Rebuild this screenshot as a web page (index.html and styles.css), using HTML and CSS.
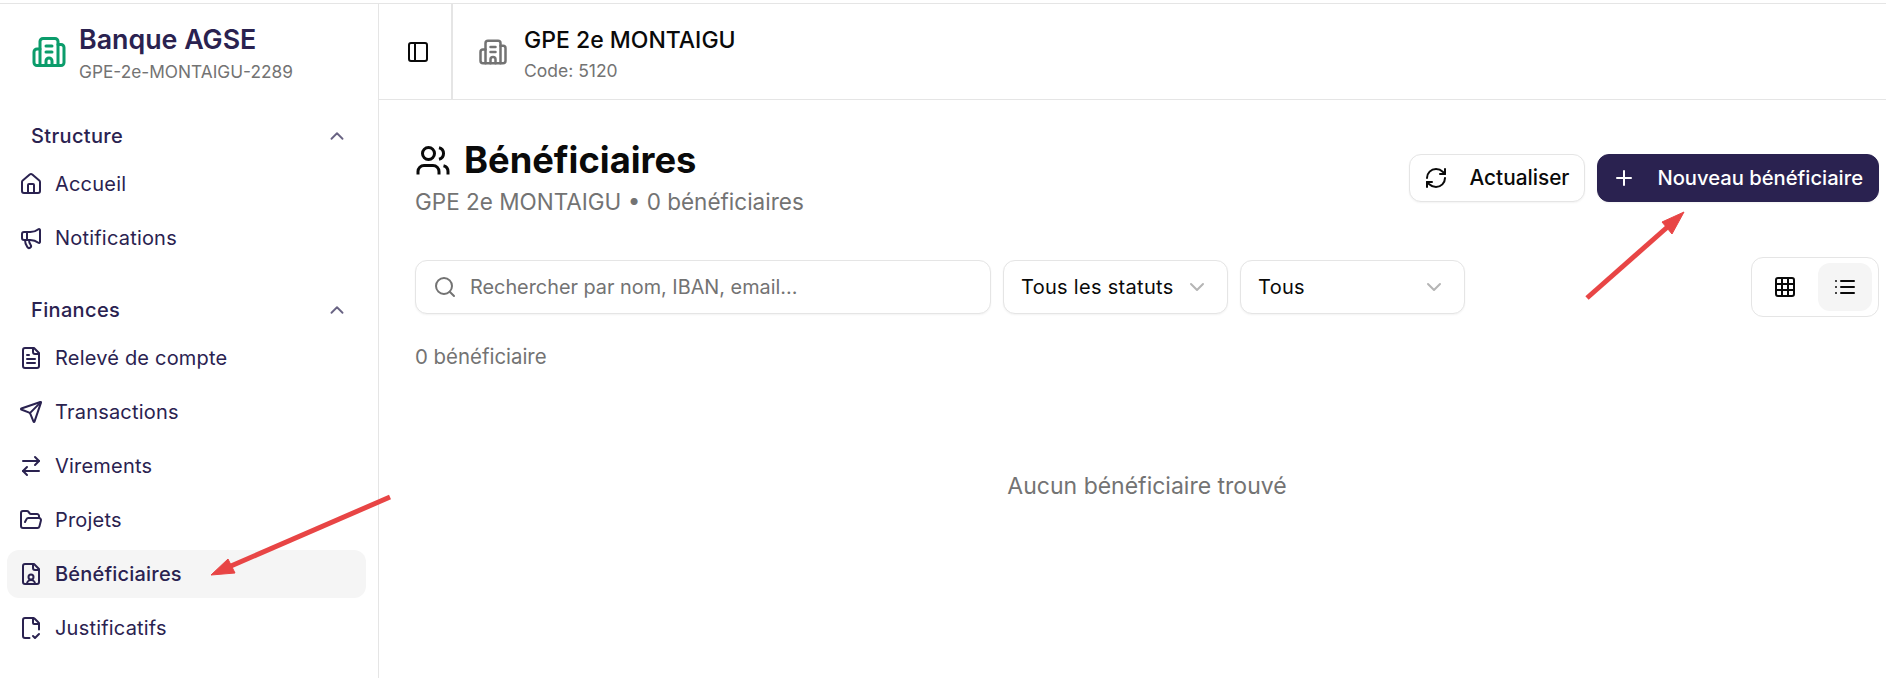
FILE: index.html
```html
<!DOCTYPE html>
<html lang="fr">
<head>
    <meta charset="UTF-8">
    <title>Bénéficiaires - Banque AGSE</title>
    <link rel="stylesheet" href="styles.css">
</head>
<body>
    <svg class="sprite" width="0" height="0">
        <symbol id="i-building" viewBox="0 0 24 24"><path d="M10 12h4"/><path d="M10 8h4"/><path d="M14 21v-3a2 2 0 0 0-4 0v3"/><path d="M6 10H4a2 2 0 0 0-2 2v7a2 2 0 0 0 2 2h16a2 2 0 0 0 2-2V9a2 2 0 0 0-2-2h-2"/><path d="M6 21V5a2 2 0 0 1 2-2h8a2 2 0 0 1 2 2v16"/></symbol>
        <symbol id="i-up" viewBox="0 0 24 24"><path d="m18 15-6-6-6 6"/></symbol>
        <symbol id="i-down" viewBox="0 0 24 24"><path d="m6 9 6 6 6-6"/></symbol>
        <symbol id="i-home" viewBox="0 0 24 24"><path d="M15 21v-8a1 1 0 0 0-1-1h-4a1 1 0 0 0-1 1v8"/><path d="M3 10a2 2 0 0 1 .709-1.528l7-6a2 2 0 0 1 2.582 0l7 6A2 2 0 0 1 21 10v9a2 2 0 0 1-2 2H5a2 2 0 0 1-2-2z"/></symbol>
        <symbol id="i-megaphone" viewBox="0 0 24 24"><path d="M11 6a13 13 0 0 0 8.4-2.8A1 1 0 0 1 21 4v12a1 1 0 0 1-1.6.8A13 13 0 0 0 11 14H5a2 2 0 0 1-2-2V8a2 2 0 0 1 2-2z"/><path d="M6 14a12 12 0 0 0 2.4 7.2 2 2 0 0 0 3.2-2.4A8 8 0 0 1 10 14"/><path d="M8 6v8"/></symbol>
        <symbol id="i-file" viewBox="0 0 24 24"><path d="M15 2H6a2 2 0 0 0-2 2v16a2 2 0 0 0 2 2h12a2 2 0 0 0 2-2V7Z"/><path d="M14 2v4a2 2 0 0 0 2 2h4"/><path d="M10 9H8"/><path d="M16 13H8"/><path d="M16 17H8"/></symbol>
        <symbol id="i-send" viewBox="0 0 24 24"><path d="M14.536 21.686a.5.5 0 0 0 .937-.024l6.5-19a.496.496 0 0 0-.635-.635l-19 6.5a.5.5 0 0 0-.024.937l7.93 3.18a2 2 0 0 1 1.112 1.11z"/><path d="m21.854 2.147-10.94 10.939"/></symbol>
        <symbol id="i-swap" viewBox="0 0 24 24"><path d="m16 3 4 4-4 4"/><path d="M20 7H4"/><path d="m8 21-4-4 4-4"/><path d="M4 17h16"/></symbol>
        <symbol id="i-folder" viewBox="0 0 24 24"><path d="m6 14 1.5-2.9A2 2 0 0 1 9.24 10H20a2 2 0 0 1 1.94 2.5l-1.54 6a2 2 0 0 1-1.95 1.5H4a2 2 0 0 1-2-2V5a2 2 0 0 1 2-2h3.9a2 2 0 0 1 1.69.9l.81 1.2a2 2 0 0 0 1.67.9H18a2 2 0 0 1 2 2v2"/></symbol>
        <symbol id="i-file-user" viewBox="0 0 24 24"><path d="M14 2v4a2 2 0 0 0 2 2h4"/><path d="M16 22a4 4 0 0 0-8 0"/><path d="M15 2H6a2 2 0 0 0-2 2v16a2 2 0 0 0 2 2h12a2 2 0 0 0 2-2V7z"/><circle cx="12" cy="15" r="2.5"/></symbol>
        <symbol id="i-file-check" viewBox="0 0 24 24"><path d="M10.5 22H6a2 2 0 0 1-2-2V4a2 2 0 0 1 2-2h8a2.4 2.4 0 0 1 1.706.706l3.588 3.588A2.4 2.4 0 0 1 20 7v6.5"/><path d="M14 2v5a1 1 0 0 0 1 1h5"/><path d="m14 20 2 2 4-4"/></symbol>
        <symbol id="i-panel" viewBox="0 0 24 24"><rect width="18" height="18" x="3" y="3" rx="2"/><path d="M9 3v18"/></symbol>
        <symbol id="i-users" viewBox="0 0 24 24"><path d="M16 21v-2a4 4 0 0 0-4-4H6a4 4 0 0 0-4 4v2"/><circle cx="9" cy="7" r="4"/><path d="M22 21v-2a4 4 0 0 0-3-3.87"/><path d="M16 3.13a4 4 0 0 1 0 7.75"/></symbol>
        <symbol id="i-refresh" viewBox="0 0 24 24"><path d="M3 12a9 9 0 0 1 9-9 9.75 9.75 0 0 1 6.74 2.74L21 8"/><path d="M21 3v5h-5"/><path d="M21 12a9 9 0 0 1-9 9 9.75 9.75 0 0 1-6.74-2.74L3 16"/><path d="M8 16H3v5"/></symbol>
        <symbol id="i-plus" viewBox="0 0 24 24"><path d="M5 12h14"/><path d="M12 5v14"/></symbol>
        <symbol id="i-search" viewBox="0 0 24 24"><circle cx="11" cy="11" r="8"/><path d="m21 21-4.3-4.3"/></symbol>
        <symbol id="i-grid" viewBox="0 0 24 24"><rect width="18" height="18" x="3" y="3" rx="2"/><path d="M3 9h18"/><path d="M3 15h18"/><path d="M9 3v18"/><path d="M15 3v18"/></symbol>
        <symbol id="i-list" viewBox="0 0 24 24"><path d="M3 12h.01"/><path d="M3 18h.01"/><path d="M3 6h.01"/><path d="M8 12h13"/><path d="M8 18h13"/><path d="M8 6h13"/></symbol>
    </svg>

    <div class="app">
        <aside class="sidebar">
            <div class="brand">
                <svg class="icon brand-icon"><use href="#i-building"/></svg>
                <div>
                    <div class="brand-name">Banque AGSE</div>
                    <div class="brand-code">GPE-2e-MONTAIGU-2289</div>
                </div>
            </div>

            <div class="nav-group">
                <div class="nav-head">Structure <svg class="icon nav-chevron"><use href="#i-up"/></svg></div>
                <a class="nav-item"><svg class="icon"><use href="#i-home"/></svg>Accueil</a>
                <a class="nav-item"><svg class="icon"><use href="#i-megaphone"/></svg>Notifications</a>
            </div>

            <div class="nav-group">
                <div class="nav-head">Finances <svg class="icon nav-chevron"><use href="#i-up"/></svg></div>
                <a class="nav-item"><svg class="icon"><use href="#i-file"/></svg>Relevé de compte</a>
                <a class="nav-item"><svg class="icon"><use href="#i-send"/></svg>Transactions</a>
                <a class="nav-item"><svg class="icon"><use href="#i-swap"/></svg>Virements</a>
                <a class="nav-item"><svg class="icon"><use href="#i-folder"/></svg>Projets</a>
                <a class="nav-item active"><svg class="icon"><use href="#i-file-user"/></svg>Bénéficiaires</a>
                <a class="nav-item"><svg class="icon"><use href="#i-file-check"/></svg>Justificatifs</a>
            </div>
        </aside>

        <div class="main">
            <header class="topbar">
                <div class="topbar-toggle"><svg class="icon"><use href="#i-panel"/></svg></div>
                <div class="topbar-group">
                    <svg class="icon group-icon"><use href="#i-building"/></svg>
                    <div>
                        <div class="group-name">GPE 2e MONTAIGU</div>
                        <div class="group-code">Code: 5120</div>
                    </div>
                </div>
            </header>

            <main class="content">
                <div class="page-head">
                    <div>
                        <h1 class="page-title"><svg class="icon title-icon"><use href="#i-users"/></svg>Bénéficiaires</h1>
                        <p class="page-sub">GPE 2e MONTAIGU • 0 bénéficiaires</p>
                    </div>
                    <div class="actions">
                        <button class="btn"><svg class="icon"><use href="#i-refresh"/></svg>Actualiser</button>
                        <button class="btn primary"><svg class="icon"><use href="#i-plus"/></svg>Nouveau bénéficiaire</button>
                    </div>
                </div>

                <div class="toolbar">
                    <div class="search">
                        <svg class="icon"><use href="#i-search"/></svg>
                        <input type="text" placeholder="Rechercher par nom, IBAN, email...">
                    </div>
                    <div class="select">Tous les statuts <svg class="icon"><use href="#i-down"/></svg></div>
                    <div class="select">Tous <svg class="icon"><use href="#i-down"/></svg></div>
                    <div class="view-toggle">
                        <div class="view-btn"><svg class="icon"><use href="#i-grid"/></svg></div>
                        <div class="view-btn active"><svg class="icon"><use href="#i-list"/></svg></div>
                    </div>
                </div>

                <p class="count">0 bénéficiaire</p>
                <p class="empty">Aucun bénéficiaire trouvé</p>
            </main>
        </div>
    </div>

    <!-- annotation arrows drawn over the screenshot -->
    <svg class="arrows" viewBox="0 0 1886 678">
        <path class="arrow-line" d="M390 497 224 569"/>
        <path class="arrow-head" d="M211 575 228 559 235 573Z"/>
        <path class="arrow-line" d="M1587 298 1672 223"/>
        <path class="arrow-head" d="M1684 212 1662 222 1672 234Z"/>
    </svg>
</body>
</html>
```

FILE: styles.css
```css
* {
    box-sizing: border-box;
}
html, body {
    height: 100%;
}
body {
    margin: 0;
    overflow: hidden;
    position: relative;
    background: white;
    color: #0a0a0a;
    font-family: Inter, sans-serif;
    font-size: 20px;
}
.sprite {
    position: absolute;
}
.icon {
    width: 24px;
    height: 24px;
    flex-shrink: 0;
    fill: none;
    stroke: currentColor;
    stroke-width: 2;
    stroke-linecap: round;
    stroke-linejoin: round;
}
.app {
    display: flex;
    height: 100%;
    padding-top: 3px;
}
.app::before {
    content: "";
    position: absolute;
    top: 3px;
    left: 0;
    right: 0;
    height: 1px;
    background: #e5e5e5;
}

/* sidebar */
.sidebar {
    width: 379px;
    flex-shrink: 0;
    padding: 1px 12px 0 7px;
    border-right: 1px solid #e5e5e5;
    color: #2a2250;
}
.brand {
    display: flex;
    align-items: center;
    gap: 12px;
    height: 96px;
    padding: 3px 0 0 24px;
}
.brand-icon {
    width: 36px;
    height: 36px;
    margin-top: -3px;
    color: #0b9c6b;
}
.brand-name {
    font-size: 26.8px;
    font-weight: 600;
    line-height: 32px;
}
.brand-code {
    margin-top: 5px;
    font-size: 17.3px;
    line-height: 24px;
    color: #737373;
}
.nav-group {
    display: flex;
    flex-direction: column;
    gap: 6px;
    margin-top: 16px;
}
.nav-group + .nav-group {
    margin-top: 28px;
}
.nav-head {
    display: flex;
    align-items: center;
    justify-content: space-between;
    height: 40px;
    margin-bottom: -2px;
    padding: 0 18px 0 24px;
    font-size: 20px;
    font-weight: 500;
    letter-spacing: .35px;
}
.nav-chevron {
    width: 22px;
    height: 22px;
    opacity: .7;
}
.nav-item {
    display: flex;
    align-items: center;
    gap: 12px;
    height: 48px;
    padding-left: 12px;
    border-radius: 12px;
    font-size: 20px;
    letter-spacing: .2px;
}
.nav-item.active {
    background: #f5f5f5;
    font-weight: 500;
}

/* top bar */
.main {
    flex: 1;
    min-width: 0;
}
.topbar {
    display: flex;
    align-items: stretch;
    height: 97px;
    padding-top: 1px;
    border-bottom: 1px solid #e5e5e5;
}
.topbar-toggle {
    display: flex;
    align-items: center;
    justify-content: center;
    width: 74px;
    padding-left: 6px;
    border-right: 2px solid #e5e5e5;
}
.topbar-group {
    display: flex;
    align-items: center;
    gap: 16px;
    padding: 4px 0 0 25px;
}
.group-icon {
    width: 30px;
    height: 30px;
    margin-top: -4px;
    color: #737373;
}
.group-name {
    font-size: 23px;
    font-weight: 500;
    line-height: 30px;
}
.group-code {
    margin-top: 4px;
    font-size: 17.5px;
    line-height: 24px;
    color: #737373;
}

/* page */
.content {
    padding: 37px 7px 0 36px;
}
.page-head {
    display: flex;
    align-items: center;
    justify-content: space-between;
}
.page-title {
    display: flex;
    align-items: center;
    gap: 13px;
    margin: 0;
    font-size: 36.3px;
    font-weight: 700;
    line-height: 47px;
}
.title-icon {
    width: 36px;
    height: 36px;
    stroke-linecap: butt;
}
.page-sub {
    margin: 2px 0 0;
    font-size: 22.5px;
    line-height: 32px;
    color: #737373;
}
.actions {
    display: flex;
    gap: 12px;
}
.btn {
    display: flex;
    align-items: center;
    gap: 21px;
    height: 48px;
    padding: 0 15px 0 14px;
    border: 1px solid #e5e5e5;
    border-radius: 12px;
    background: white;
    color: #0a0a0a;
    font-family: inherit;
    font-size: 20.8px;
    font-weight: 500;
    box-shadow: 0 1px 2px rgba(0, 0, 0, .05);
}
.btn.primary {
    border-color: #2a2250;
    background: #2a2250;
    color: white;
    font-size: 20.2px;
}
.toolbar {
    display: flex;
    align-items: center;
    gap: 12px;
    margin-top: 39px;
}
.search, .select {
    display: flex;
    align-items: center;
    height: 54px;
    border: 1px solid #e5e5e5;
    border-radius: 12px;
    background: white;
    box-shadow: 0 1px 2px rgba(0, 0, 0, .05);
}
.search {
    width: 576px;
    gap: 11px;
    padding-left: 17px;
    color: #737373;
}
.search input {
    flex: 1;
    min-width: 0;
    border: none;
    outline: none;
    background: none;
    font-family: inherit;
    font-size: 19.85px;
}
.search input::placeholder {
    color: #737373;
}
.select {
    width: 225px;
    justify-content: space-between;
    padding: 0 18px 0 17px;
    font-size: 20px;
    letter-spacing: .3px;
}
.select .icon {
    color: #b5b5b5;
}
.view-toggle {
    display: flex;
    gap: 6px;
    margin-left: auto;
    padding: 5px 6px;
    border: 1px solid #e5e5e5;
    border-radius: 12px;
}
.view-btn {
    display: flex;
    align-items: center;
    justify-content: center;
    width: 54px;
    height: 48px;
    border-radius: 12px;
}
.view-btn.active {
    background: #f5f5f5;
}
.count {
    margin: 26px 0 0;
    font-size: 20.4px;
    line-height: 28px;
    color: #737373;
}
.empty {
    margin: 0;
    padding-top: 100px;
    text-align: center;
    font-size: 23px;
    line-height: 30px;
    color: #737373;
}

/* annotation arrows */
.arrows {
    position: absolute;
    top: 0;
    left: 0;
    width: 1886px;
    height: 678px;
    pointer-events: none;
}
.arrow-line {
    fill: none;
    stroke: #e84545;
    stroke-width: 5;
}
.arrow-head {
    fill: #e84545;
    stroke: #e84545;
}
```
